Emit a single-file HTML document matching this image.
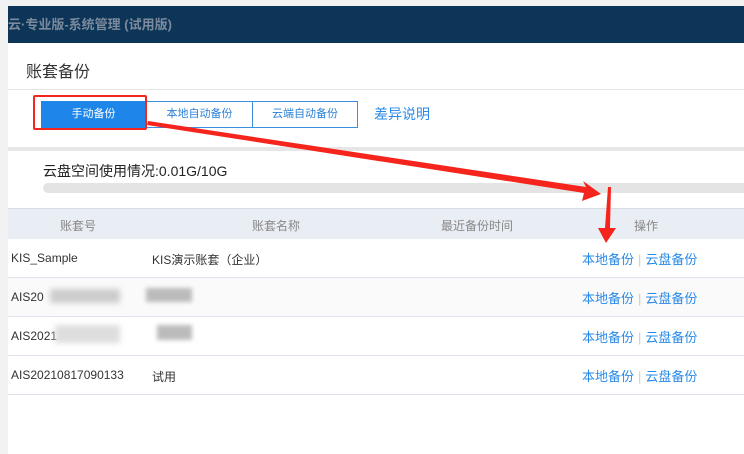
<!DOCTYPE html>
<html><head><meta charset="utf-8"><style>
body{margin:0;width:744px;height:454px;overflow:hidden;background:#fff;font-family:"Liberation Sans","Noto Sans CJK SC",sans-serif;position:relative}
.a{position:absolute;white-space:nowrap}
.lk{color:#2a8ae8;font-size:13px}
.c{font-size:12px;color:#333}
.h{font-size:12px;color:#888}
.s{color:#ccc;margin:0 4px}
</style></head><body>
<div class="a" style="left:0;top:0;width:8px;height:454px;background:#f2f2f2"></div>
<div class="a" style="left:8px;top:0;width:736px;height:6px;background:#f2f2f2"></div>
<div class="a" style="left:8px;top:6px;width:736px;height:37px;background:#0d3558"></div>
<div class="a" style="left:8px;top:14px;font-size:13px;color:#7b8a9c;font-weight:bold">云·专业版-系统管理 (试用版)</div>
<div class="a" style="left:26px;top:58px;font-size:16px;color:#333">账套备份</div>
<div class="a" style="left:8px;top:89px;width:736px;height:1px;background:#e6e6e6"></div>
<div class="a" style="left:41px;top:101px;width:105px;height:27px;background:#1e86e8;color:#fff;font-size:11px;text-align:center;line-height:27px">手动备份</div>
<div class="a" style="left:146px;top:101px;width:105px;height:25px;border:1px solid #3b8fe0;color:#2a7fd8;font-size:11px;text-align:center;line-height:25px">本地自动备份</div>
<div class="a" style="left:252px;top:101px;width:104px;height:25px;border:1px solid #3b8fe0;color:#2a7fd8;font-size:11px;text-align:center;line-height:25px">云端自动备份</div>
<div class="a" style="left:33px;top:95px;width:110px;height:31px;border:2px solid #f5241c;border-radius:2px"></div>
<div class="a lk" style="left:374px;top:104px;font-size:14px">差异说明</div>
<div class="a" style="left:8px;top:147px;width:736px;height:4px;background:#e6e6e6"></div>
<div class="a" style="left:43px;top:161px;font-size:14px;color:#222">云盘空间使用情况:0.01G/10G</div>
<div class="a" style="left:43px;top:183px;width:710px;height:10px;background:#e4e4e4;border-radius:5px"></div>
<div class="a" style="left:8px;top:208px;width:736px;height:30px;background:#e9edf4;border-top:1px solid #d6dce6"></div>
<div class="a h" style="left:60px;top:217px">账套号</div>
<div class="a h" style="left:252px;top:217px">账套名称</div>
<div class="a h" style="left:441px;top:217px">最近备份时间</div>
<div class="a h" style="left:634px;top:217px">操作</div>
<div class="a" style="left:8px;top:277px;width:736px;height:39px;background:#fafafa"></div>
<div class="a" style="left:8px;top:277px;width:736px;height:1px;background:#dde3ee"></div>
<div class="a" style="left:8px;top:316px;width:736px;height:1px;background:#dde3ee"></div>
<div class="a" style="left:8px;top:355px;width:736px;height:1px;background:#dde3ee"></div>
<div class="a" style="left:8px;top:394px;width:736px;height:1px;background:#dde3ee"></div>
<div class="a c" style="left:11px;top:251px">KIS_Sample</div>
<div class="a c" style="left:152px;top:251px">KIS演示账套（企业）</div>
<div class="a c" style="left:11px;top:290px">AIS20</div>
<div class="a" style="left:50px;top:289px;width:70px;height:14px;background:#ccc;filter:blur(3px)"></div>
<div class="a" style="left:146px;top:288px;width:46px;height:14px;background:#bbb;filter:blur(2px)"></div>
<div class="a c" style="left:11px;top:329px">AIS2021</div>
<div class="a" style="left:55px;top:325px;width:65px;height:18px;background:#ddd;filter:blur(3px)"></div>
<div class="a" style="left:157px;top:325px;width:35px;height:15px;background:#bbb;filter:blur(2px)"></div>
<div class="a c" style="left:11px;top:368px">AIS20210817090133</div>
<div class="a c" style="left:152px;top:368px">试用</div>
<div class="a lk" style="left:582px;top:249px">本地备份<span class="s">|</span>云盘备份</div>
<div class="a lk" style="left:582px;top:288px">本地备份<span class="s">|</span>云盘备份</div>
<div class="a lk" style="left:582px;top:327px">本地备份<span class="s">|</span>云盘备份</div>
<div class="a lk" style="left:582px;top:366px">本地备份<span class="s">|</span>云盘备份</div>
<svg class="a" style="left:0;top:0" width="744" height="454">
<polygon points="148,121 586,187 583,181 601,194 582,201 584,193 147,125" fill="#f5241c"/>
<polygon points="608,187 611,187 610,228 616,228 606,243 598,228 605,228" fill="#f5241c"/>
</svg>
</body></html>
